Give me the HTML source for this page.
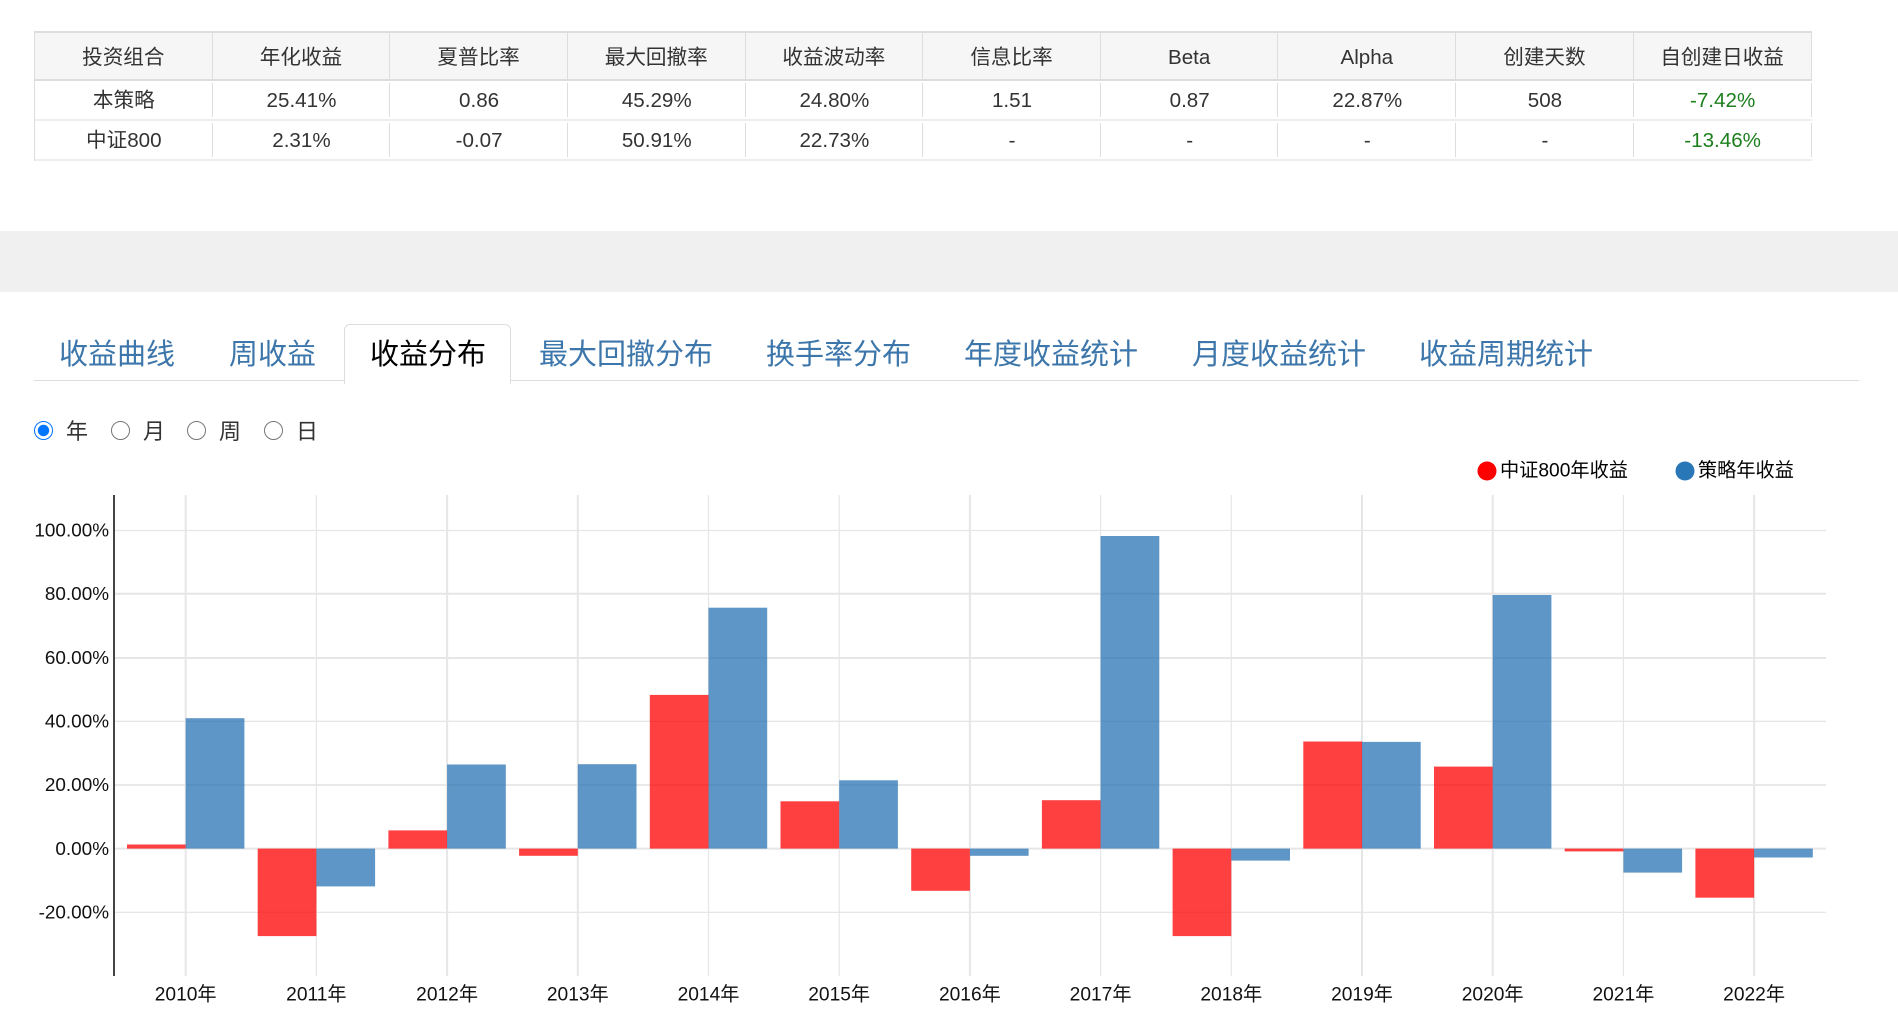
<!DOCTYPE html>
<html lang="zh-CN">
<head>
<meta charset="utf-8">
<title>收益分布</title>
<style>
html,body{margin:0;padding:0;background:#fff;width:1898px;height:1028px;overflow:hidden}
body{position:relative;font-family:"Liberation Sans","Noto Sans CJK SC",sans-serif;color:#333}
table.stats{position:absolute;left:34px;top:31px;width:1777.5px;table-layout:fixed;border-collapse:separate;border-spacing:0;border-left:1px solid #ddd;font-size:20.6px;text-align:center;box-sizing:border-box}
table.stats th,table.stats td{padding:0;font-weight:normal;box-sizing:border-box;line-height:24px}
table.stats th{height:50px;background:#f6f6f6;border-top:2px solid #ddd;border-bottom:2px solid #ddd;border-right:1px solid #ddd;padding-top:3px}
table.stats td{height:40px;padding-top:1px;border-bottom:2px solid #eee;background:linear-gradient(#ddd,#ddd) right center/1px calc(100% - 4px) no-repeat}
table.stats td.g{color:#1d7f1d}
.band{position:absolute;left:0;top:231px;width:1898px;height:61px;background:#f0f0f0}
.navline{position:absolute;left:34px;top:380px;width:1825px;height:1px;background:#ddd}
.tab{position:absolute;top:332px;font-size:29px;line-height:46px;color:#3c76aa;white-space:nowrap;text-decoration:none}
.tab.on{color:#000}
.active-box{position:absolute;left:344px;top:324px;width:167px;height:60px;box-sizing:border-box;border:1px solid #ddd;border-bottom:0;border-radius:6px 6px 0 0;background:#fff}
input[type=radio]{position:absolute;top:421px;width:19px;height:19px;margin:0}
.rl{position:absolute;top:417px;font-size:22px;line-height:30px;color:#333}
svg{position:absolute;left:0;top:0}
svg text{font-family:"Liberation Sans","Noto Sans CJK SC",sans-serif;fill:#111}
</style>
</head>
<body>
<table class="stats">
<thead><tr><th>投资组合</th><th>年化收益</th><th>夏普比率</th><th>最大回撤率</th><th>收益波动率</th><th>信息比率</th><th>Beta</th><th>Alpha</th><th>创建天数</th><th>自创建日收益</th></tr></thead>
<tbody>
<tr><td>本策略</td><td>25.41%</td><td>0.86</td><td>45.29%</td><td>24.80%</td><td>1.51</td><td>0.87</td><td>22.87%</td><td>508</td><td class="g">-7.42%</td></tr>
<tr><td>中证800</td><td>2.31%</td><td>-0.07</td><td>50.91%</td><td>22.73%</td><td>-</td><td>-</td><td>-</td><td>-</td><td class="g">-13.46%</td></tr>
</tbody>
</table>

<div class="band"></div>

<div class="navline"></div>
<div class="active-box"></div>
<a class="tab" style="left:59px">收益曲线</a>
<a class="tab" style="left:229px">周收益</a>
<a class="tab on" style="left:370px">收益分布</a>
<a class="tab" style="left:539px">最大回撤分布</a>
<a class="tab" style="left:766px">换手率分布</a>
<a class="tab" style="left:964px">年度收益统计</a>
<a class="tab" style="left:1192px">月度收益统计</a>
<a class="tab" style="left:1419px">收益周期统计</a>

<input type="radio" name="p" checked style="left:34px">
<span class="rl" style="left:66px">年</span>
<input type="radio" name="p" style="left:111px">
<span class="rl" style="left:143px">月</span>
<input type="radio" name="p" style="left:187px">
<span class="rl" style="left:219px">周</span>
<input type="radio" name="p" style="left:264px">
<span class="rl" style="left:296px">日</span>

<svg width="1898" height="1028" viewBox="0 0 1898 1028" xmlns="http://www.w3.org/2000/svg">
<g stroke="#e6e6e6" fill="none">
<path stroke-width="1.2" d="M114 530.5H1826"/>
<path stroke-width="2" d="M114 593.8H1826"/>
<path stroke-width="2" d="M114 658H1826"/>
<path stroke-width="1.4" d="M114 721.3H1826"/>
<path stroke-width="1.8" d="M114 785H1826"/>
<path stroke-width="2" d="M114 848.6H1826"/>
<path stroke-width="1.2" d="M114 912.4H1826"/>
<path stroke-width="2" d="M185.7 495V976"/>
<path stroke-width="1.2" d="M316.4 495V976"/>
<path stroke-width="2" d="M447.1 495V976"/>
<path stroke-width="2" d="M577.8 495V976"/>
<path stroke-width="1.2" d="M708.5 495V976"/>
<path stroke-width="1.2" d="M839.2 495V976"/>
<path stroke-width="2" d="M969.9 495V976"/>
<path stroke-width="1.2" d="M1100.6 495V976"/>
<path stroke-width="1.2" d="M1231.3 495V976"/>
<path stroke-width="2" d="M1362 495V976"/>
<path stroke-width="2" d="M1492.7 495V976"/>
<path stroke-width="1.2" d="M1623.4 495V976"/>
<path stroke-width="2" d="M1754.1 495V976"/>
</g>
<path d="M114 495V976" stroke="#444" stroke-width="2" fill="none"/>
<g fill="#ff0000" fill-opacity="0.75">
<rect x="127" y="844.5" width="58.7" height="4.1"/>
<rect x="257.7" y="848.6" width="58.7" height="87.5"/>
<rect x="388.4" y="830.4" width="58.7" height="18.2"/>
<rect x="519.1" y="848.6" width="58.7" height="7.2"/>
<rect x="649.8" y="694.9" width="58.7" height="153.7"/>
<rect x="780.5" y="801.3" width="58.7" height="47.3"/>
<rect x="911.2" y="848.6" width="58.7" height="42.2"/>
<rect x="1041.9" y="800.2" width="58.7" height="48.4"/>
<rect x="1172.6" y="848.6" width="58.7" height="87.5"/>
<rect x="1303.3" y="741.5" width="58.7" height="107.1"/>
<rect x="1434" y="766.6" width="58.7" height="82"/>
<rect x="1564.7" y="848.6" width="58.7" height="2.8"/>
<rect x="1695.4" y="848.6" width="58.7" height="49.1"/>
</g>
<g fill="#196aaf" fill-opacity="0.7">
<rect x="185.7" y="718.2" width="58.7" height="130.4"/>
<rect x="316.4" y="848.6" width="58.7" height="37.8"/>
<rect x="447.1" y="764.5" width="58.7" height="84.1"/>
<rect x="577.8" y="764.2" width="58.7" height="84.4"/>
<rect x="708.5" y="607.7" width="58.7" height="240.9"/>
<rect x="839.2" y="780.3" width="58.7" height="68.3"/>
<rect x="969.9" y="848.6" width="58.7" height="7.2"/>
<rect x="1100.6" y="536" width="58.7" height="312.6"/>
<rect x="1231.3" y="848.6" width="58.7" height="12"/>
<rect x="1362" y="741.9" width="58.7" height="106.7"/>
<rect x="1492.7" y="595" width="58.7" height="253.6"/>
<rect x="1623.4" y="848.6" width="58.7" height="24"/>
<rect x="1754.1" y="848.6" width="58.7" height="8.9"/>
</g>
<g font-size="18.9" text-anchor="end" dominant-baseline="central">
<text x="109" y="531.2">100.00%</text>
<text x="109" y="594.5">80.00%</text>
<text x="109" y="658.7">60.00%</text>
<text x="109" y="722">40.00%</text>
<text x="109" y="785.7">20.00%</text>
<text x="109" y="849.3">0.00%</text>
<text x="109" y="913.1">-20.00%</text>
</g>
<g font-size="19.2" text-anchor="middle" dominant-baseline="central">
<text x="185.7" y="995">2010年</text>
<text x="316.4" y="995">2011年</text>
<text x="447.1" y="995">2012年</text>
<text x="577.8" y="995">2013年</text>
<text x="708.5" y="995">2014年</text>
<text x="839.2" y="995">2015年</text>
<text x="969.9" y="995">2016年</text>
<text x="1100.6" y="995">2017年</text>
<text x="1231.3" y="995">2018年</text>
<text x="1362" y="995">2019年</text>
<text x="1492.7" y="995">2020年</text>
<text x="1623.4" y="995">2021年</text>
<text x="1754.1" y="995">2022年</text>
</g>
<circle cx="1487" cy="471" r="9.5" fill="#ff0000"/>
<circle cx="1685" cy="471" r="9.5" fill="#2a77b8"/>
<g font-size="19.2" dominant-baseline="central">
<text x="1500" y="471" style="fill:#000">中证800年收益</text>
<text x="1698" y="471" style="fill:#000">策略年收益</text>
</g>
</svg>
</body>
</html>
